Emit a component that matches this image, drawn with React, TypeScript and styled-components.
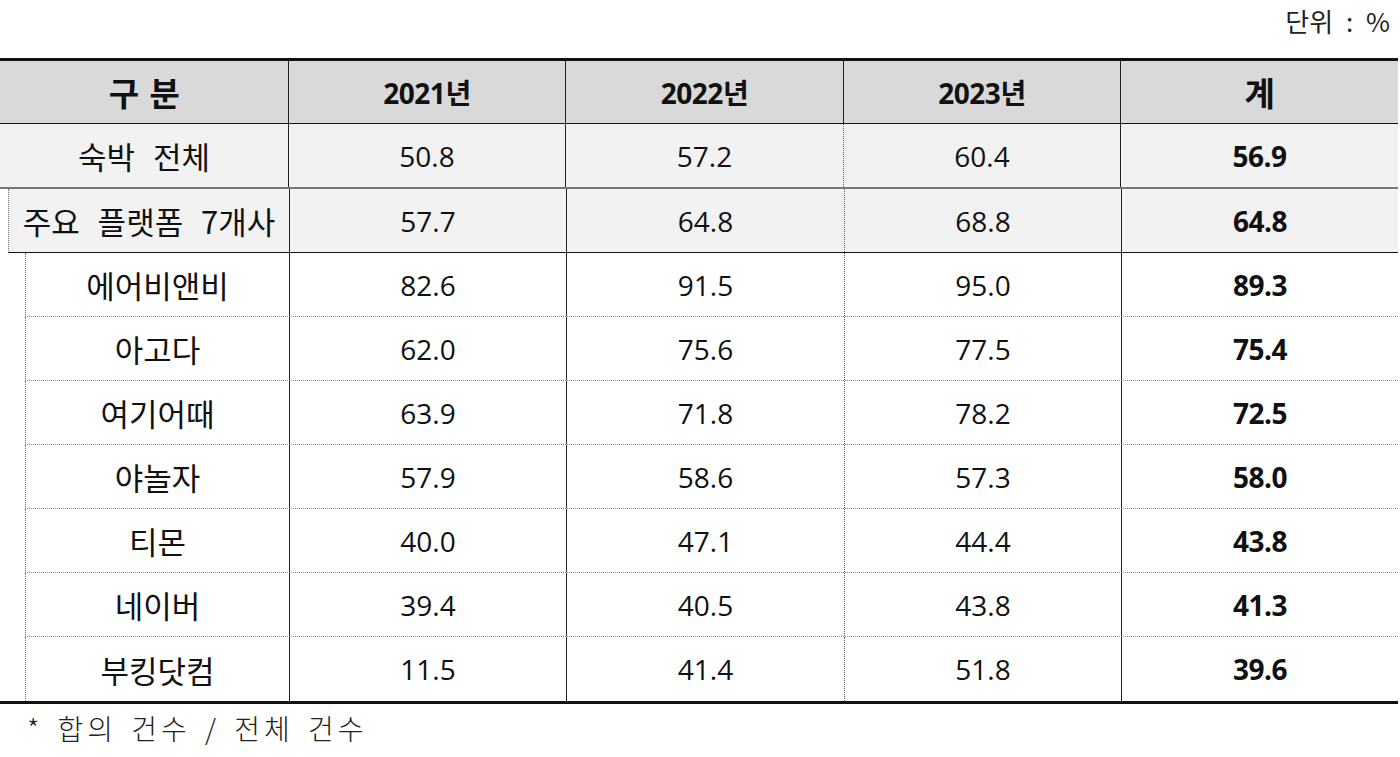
import styled, { createGlobalStyle, css } from 'styled-components'

const GlobalStyle = createGlobalStyle`
  html, body {
    margin: 0;
    padding: 0;
    background: #fff;
  }
  body {
    font-family: "Open Sans", "Noto Sans CJK KR", sans-serif;
    color: #111;
  }
`

const Page = styled.div`
  width: 1400px;
  display: flex;
  flex-direction: column;
`

const Unit = styled.div`
  height: 58px;
  display: flex;
  justify-content: flex-end;
  align-items: flex-start;
  padding: 2px 10px 0 0;
  box-sizing: border-box;
  font-size: 26px;
  font-family: "Noto Sans CJK KR", sans-serif;
  word-spacing: 7px;
  color: #222;
`

const Table = styled.div`
  width: 1398px;
  border-top: 3px solid #111;
  border-bottom: 3px solid #111;
  display: flex;
  flex-direction: column;
`

type Kind = 'head' | 'total' | 'group' | 'item' | 'last'

const Row = styled.div<{ $kind: Kind; $indent: number }>`
  display: grid;
  grid-template-columns: ${p => 289 - p.$indent}px 277px 278px 277px 1fr;
  margin-left: ${p => p.$indent}px;
  box-sizing: border-box;
  height: 64px;
  background: ${p => (p.$kind === 'head' ? '#d9d9d9' : p.$kind === 'total' || p.$kind === 'group' ? '#f2f2f2' : '#fff')};
  ${p => p.$kind === 'head' && css`height: 63px; border-bottom: 1px solid #111;`}
  ${p => p.$kind === 'total' && css`height: 65px; border-bottom: 2px solid #777;`}
  ${p => p.$kind === 'group' && css`border-bottom: 1px solid #111; border-left: 1px dotted #777;`}
  ${p => p.$kind === 'item' && css`border-bottom: 1px dotted #888; border-left: 1px dotted #777;`}
  ${p => p.$kind === 'last' && css`border-left: 1px dotted #777;`}
`

const Cell = styled.div<{ $bold?: boolean; $edge?: 'solid' | 'dotted' | 'none' }>`
  display: flex;
  align-items: center;
  justify-content: center;
  font-size: 28px;
  font-weight: ${p => (p.$bold ? 700 : 400)};
  letter-spacing: ${p => (p.$bold ? '-0.5px' : '0')};
  border-right: ${p => (p.$edge === 'dotted' ? '1px dotted #666' : p.$edge === 'none' ? 'none' : '1px solid #222')};
  white-space: pre;
`

const NameCell = styled(Cell)<{ $head?: boolean }>`
  font-size: ${p => (p.$head ? '33px' : '31px')};
  word-spacing: ${p => (p.$head ? '4px' : '2px')};
  font-family: "Noto Sans CJK KR", sans-serif;
`

const Note = styled.div`
  padding: 4px 0 0 27px;
  font-size: 28px;
  letter-spacing: 4px;
  word-spacing: 4px;
  color: #222;
  font-family: "Noto Sans CJK KR", sans-serif;
  font-weight: 300;
`

const rows: { name: string; kind: Kind; indent: number; v: string[] }[] = [
  { name: '숙박  전체', kind: 'total', indent: 0, v: ['50.8', '57.2', '60.4', '56.9'] },
  { name: '주요  플랫폼  7개사', kind: 'group', indent: 8, v: ['57.7', '64.8', '68.8', '64.8'] },
  { name: '에어비앤비', kind: 'item', indent: 25, v: ['82.6', '91.5', '95.0', '89.3'] },
  { name: '아고다', kind: 'item', indent: 25, v: ['62.0', '75.6', '77.5', '75.4'] },
  { name: '여기어때', kind: 'item', indent: 25, v: ['63.9', '71.8', '78.2', '72.5'] },
  { name: '야놀자', kind: 'item', indent: 25, v: ['57.9', '58.6', '57.3', '58.0'] },
  { name: '티몬', kind: 'item', indent: 25, v: ['40.0', '47.1', '44.4', '43.8'] },
  { name: '네이버', kind: 'item', indent: 25, v: ['39.4', '40.5', '43.8', '41.3'] },
  { name: '부킹닷컴', kind: 'last', indent: 25, v: ['11.5', '41.4', '51.8', '39.6'] },
]

const App = () => {
  return (
    <Page>
      <GlobalStyle />
      <Unit>단위 : %</Unit>
      <Table>
        <Row $kind="head" $indent={0}>
          <NameCell $bold $head>구 분</NameCell>
          <Cell $bold>2021년</Cell>
          <Cell $bold>2022년</Cell>
          <Cell $bold>2023년</Cell>
          <NameCell $bold $head $edge="none">계</NameCell>
        </Row>
        {rows.map(r => (
          <Row key={r.name} $kind={r.kind} $indent={r.indent}>
            <NameCell>{r.name}</NameCell>
            <Cell>{r.v[0]}</Cell>
            <Cell $edge="dotted">{r.v[1]}</Cell>
            <Cell>{r.v[2]}</Cell>
            <Cell $bold $edge="none">{r.v[3]}</Cell>
          </Row>
        ))}
      </Table>
      <Note>* 합의 건수 / 전체 건수</Note>
    </Page>
  )
}

export default App
